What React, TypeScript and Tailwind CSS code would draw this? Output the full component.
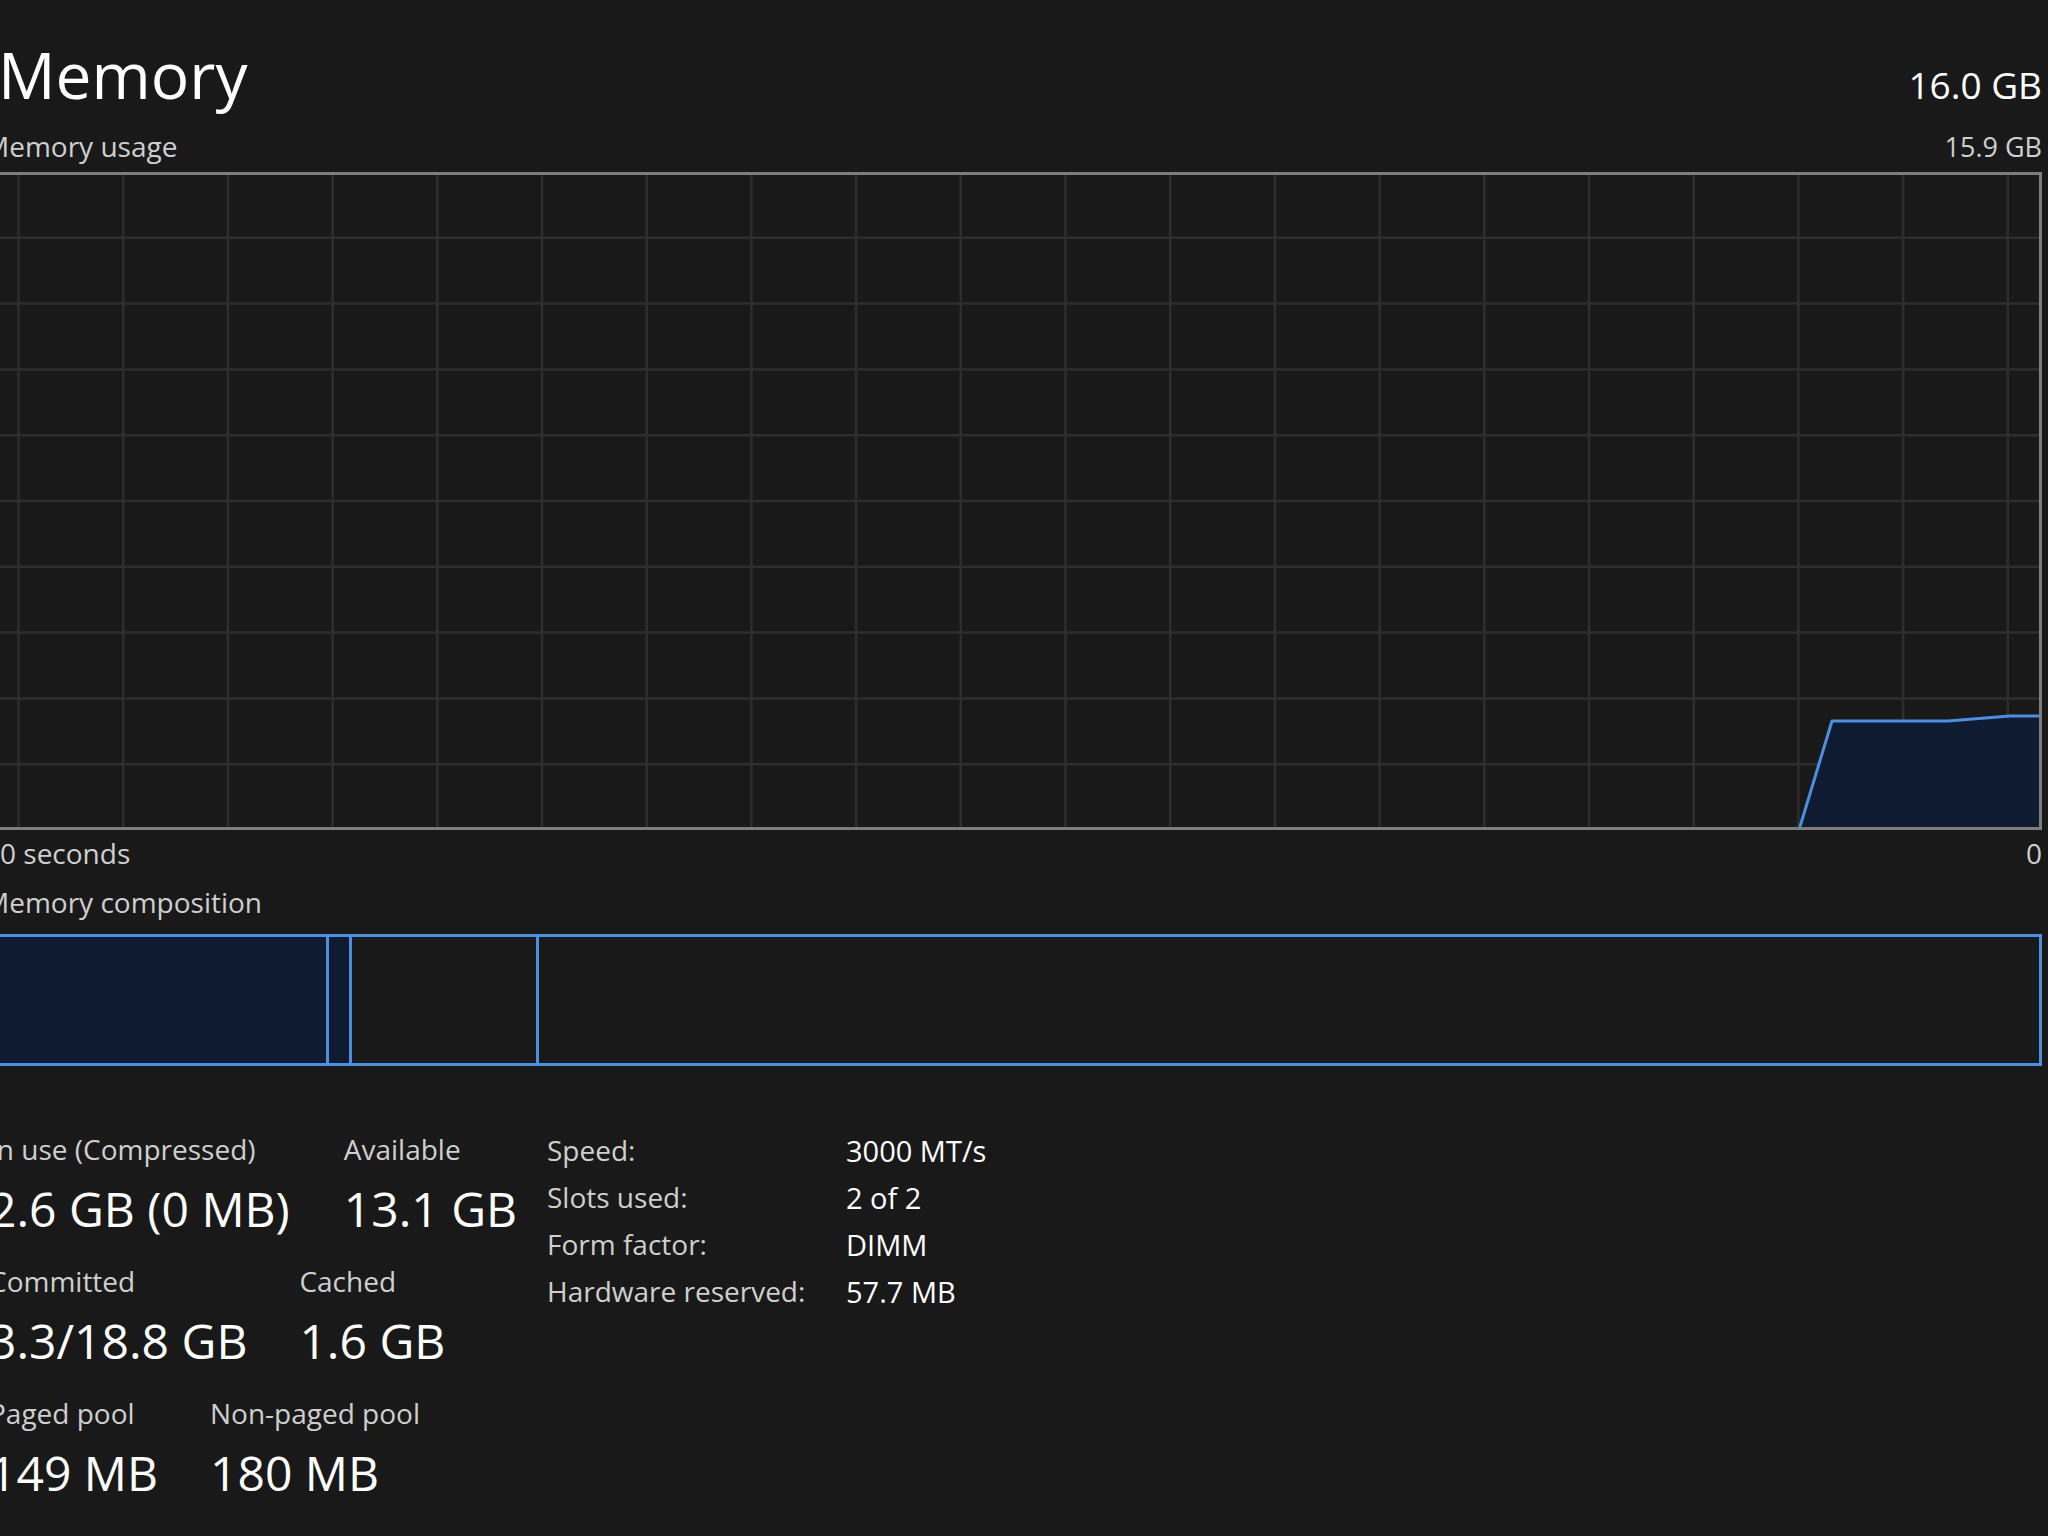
const GRID_X0 = 34.5 // first visible vertical grid line, in svg coords
const GRID_DX = 104.7
const GRID_ROWS = 10
const GRAPH_W = 2058
const GRAPH_H = 658

function UsageGraph() {
    const vlines: number[] = []
    for (let x = GRID_X0; x < GRAPH_W - 4; x += GRID_DX) vlines.push(x)
    const hlines: number[] = []
    for (let i = 1; i < GRID_ROWS; i++) hlines.push((GRAPH_H / GRID_ROWS) * i)

    const pts = '1815,658 1848,549 1964,549 2026,544 2056,544'

    return (
        <svg width={GRAPH_W} height={GRAPH_H} className="block">
            {/* grid */}
            {vlines.map((x) => (
                <line key={'v' + x} x1={x} y1={0} x2={x} y2={GRAPH_H} stroke="#2e2e2e" strokeWidth={2.5} />
            ))}
            {hlines.map((y) => (
                <line key={'h' + y} x1={0} y1={y} x2={GRAPH_W} y2={y} stroke="#2e2e2e" strokeWidth={2.5} />
            ))}

            {/* usage area */}
            <polygon points={`${pts} 2056,658`} fill="#0e1b31" />
            <polyline points={pts} fill="none" stroke="#4a8fe2" strokeWidth={3} strokeLinejoin="round" />

            {/* frame (left edge is out of view) */}
            <line x1={0} y1={1.5} x2={GRAPH_W} y2={1.5} stroke="#7d7d7d" strokeWidth={3} />
            <line x1={0} y1={GRAPH_H - 1.5} x2={GRAPH_W} y2={GRAPH_H - 1.5} stroke="#7d7d7d" strokeWidth={3} />
            <line x1={GRAPH_W - 1.5} y1={0} x2={GRAPH_W - 1.5} y2={GRAPH_H} stroke="#7d7d7d" strokeWidth={3} />
        </svg>
    )
}

function Stat({ label, value }: { label: string; value: string }) {
    return (
        <div className="flex flex-col">
            <span className="text-[28px] leading-[29px] text-[#cfcfcf] whitespace-nowrap">{label}</span>
            <span className="mt-[21px] text-[48px] leading-[48px] text-white whitespace-nowrap">{value}</span>
        </div>
    )
}

export default function App() {
    const specs = [
        ['Speed:', '3000 MT/s'],
        ['Slots used:', '2 of 2'],
        ['Form factor:', 'DIMM'],
        ['Hardware reserved:', '57.7 MB'],
    ]

    return (
        <div
            className="w-full min-h-screen bg-[#191919] overflow-hidden"
            style={{ fontFamily: "'Segoe UI', 'Open Sans', 'Noto Sans', sans-serif" }}
        >
            <div className="-ml-[16px] w-[2058px]">
                {/* Header */}
                <div className="flex items-baseline justify-between pt-[42px]">
                    <span className="pl-[14px] text-[64px] leading-[66px] text-white">Memory</span>
                    <span className="text-[37px] leading-[38px] text-white">16.0 GB</span>
                </div>

                <div className="mt-[24px] flex justify-between text-[28px] leading-[29px] text-[#cfcfcf]">
                    <span>Memory usage</span>
                    <span className="text-[27px]">15.9 GB</span>
                </div>

                {/* Usage graph */}
                <div className="mt-[11px]">
                    <UsageGraph />
                </div>

                <div className="mt-[9px] flex justify-between text-[28px] leading-[29px] text-[#cfcfcf]">
                    <span>60 seconds</span>
                    <span>0</span>
                </div>

                <div className="mt-[20px] text-[28px] leading-[29px] text-[#cfcfcf]">Memory composition</div>

                {/* Composition bar */}
                <div className="mt-[17px] flex h-[132px] border-[3px] border-l-0 border-[#4a8fe2]">
                    <div className="w-[345px] shrink-0 bg-[#0e1b31] border-r-[3px] border-[#4a8fe2]" />
                    <div className="w-[23px] shrink-0 bg-[#0e1b31] border-r-[3px] border-[#4a8fe2]" />
                    <div className="w-[187px] shrink-0 border-r-[3px] border-[#4a8fe2]" />
                    <div className="flex-1" />
                </div>

                {/* Stats */}
                <div className="mt-[61px] flex items-start">
                    <div className="w-[563px] shrink-0 pt-[8px] pl-[5px] flex flex-col">
                        <div className="flex gap-[54px]">
                            <Stat label="In use (Compressed)" value="2.6 GB (0 MB)" />
                            <Stat label="Available" value="13.1 GB" />
                        </div>
                        <div className="mt-[34px] flex gap-[52px]">
                            <Stat label="Committed" value="3.3/18.8 GB" />
                            <Stat label="Cached" value="1.6 GB" />
                        </div>
                        <div className="mt-[34px] flex gap-[52px]">
                            <Stat label="Paged pool" value="149 MB" />
                            <Stat label="Non-paged pool" value="180 MB" />
                        </div>
                    </div>

                    <div className="grid grid-cols-[299px_auto] text-[28px] leading-[47px]">
                        {specs.map(([k, v]) => (
                            <div key={k} className="contents">
                                <span className="text-[#cfcfcf] whitespace-nowrap">{k}</span>
                                <span className="text-[29px] text-white whitespace-nowrap">{v}</span>
                            </div>
                        ))}
                    </div>
                </div>
            </div>
        </div>
    )
}
